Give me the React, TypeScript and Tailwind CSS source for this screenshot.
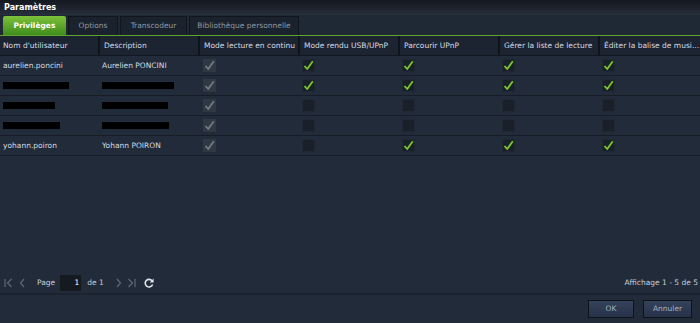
import React from 'react';

const cols = [
  { label: "Nom d'utilisateur", w: 'w-[98px]' },
  { label: 'Description', w: 'w-[100px]' },
  { label: 'Mode lecture en continu', w: 'w-[100px]' },
  { label: 'Mode rendu USB/UPnP', w: 'w-[100px]' },
  { label: 'Parcourir UPnP', w: 'w-[100px]' },
  { label: 'Gérer la liste de lecture', w: 'w-[100px]' },
  { label: 'Éditer la balise de musi...', w: 'flex-1' },
];

type Row = { user: string; desc: string; userMask?: number; descMask?: number; checks: boolean[] };

const rows: Row[] = [
  { user: 'aurelien.poncini', desc: 'Aurelien PONCINI', checks: [true, true, true, true] },
  { user: '', desc: '', userMask: 66, descMask: 72, checks: [true, true, true, true] },
  { user: '', desc: '', userMask: 52, descMask: 66, checks: [false, false, false, false] },
  { user: '', desc: '', userMask: 57, descMask: 67, checks: [false, false, false, false] },
  { user: 'yohann.poiron', desc: 'Yohann POIRON', checks: [false, true, true, true] },
];

function Check({ color }: { color: string }) {
  return (
    <svg width="11" height="11" viewBox="0 0 11 11">
      <path d="M1.5 6 L4.2 9 L9.8 1.2" fill="none" stroke={color} strokeWidth="1.8" strokeLinejoin="round" />
    </svg>
  );
}

function Box({ on, disabled }: { on: boolean; disabled?: boolean }) {
  return (
    <div
      className={`w-[13px] h-[13px] flex items-center justify-center ${
        disabled ? 'bg-[#2f3843]' : 'bg-[#1a2029] border border-[#202833]'
      }`}
    >
      {on && <Check color={disabled ? '#737b85' : '#79c92c'} />}
    </div>
  );
}

function Mask({ w }: { w: number }) {
  return <span className="inline-block h-[7px] bg-black align-middle" style={{ width: w }} />;
}

export default function App() {
  return (
    <div className="w-[700px] h-[323px] flex flex-col bg-[#212b3a] text-[#d5dbe2] text-[7.5px] overflow-hidden" style={{ fontFamily: '"DejaVu Sans", Verdana, sans-serif' }}>
      {/* title */}
      <div className="h-[15px] flex items-center px-[4px] bg-gradient-to-b from-[#14181f] to-[#272f3c] text-white font-bold text-[8px]">
        Paramètres
      </div>

      {/* tabs */}
      <div className="h-[20px] flex items-end gap-[2px] pl-[3px] bg-[#1f2835]">
        <div className="w-[63px] h-[19px] flex items-center justify-center rounded-t-[2px] bg-gradient-to-b from-[#7cc23a] to-[#3f8c1c] text-white font-bold">
          Privilèges
        </div>
        <div className="w-[50px] h-[19px] flex items-center justify-center bg-[#1a222d] border border-b-0 border-[#11161d] text-[#8f99a4]">
          Options
        </div>
        <div className="w-[67px] h-[19px] flex items-center justify-center bg-[#1a222d] border border-b-0 border-[#11161d] text-[#8f99a4]">
          Transcodeur
        </div>
        <div className="w-[110px] h-[19px] flex items-center justify-center bg-[#1a222d] border border-b-0 border-[#11161d] text-[#8f99a4]">
          Bibliothèque personnelle
        </div>
      </div>
      <div className="h-[1px] bg-[#5da52b]" />

      {/* header */}
      <div className="h-[20px] flex bg-[#1c2431] border-b border-[#121820]">
        {cols.map((c, i) => (
          <div
            key={c.label}
            className={`${c.w} flex items-center pr-[3px] ${i === 0 ? 'pl-[3px]' : 'pl-[4px] border-l-2 border-[#0f141b]'} whitespace-nowrap overflow-hidden`}
          >
            {c.label}
          </div>
        ))}
      </div>

      {/* rows */}
      {rows.map((r, i) => (
        <div key={i} className="h-[20px] flex items-center border-b border-[#161d27]">
          <div className="w-[98px] px-[3px] whitespace-nowrap">{r.userMask ? <Mask w={r.userMask} /> : r.user}</div>
          <div className="w-[100px] pl-[4px] whitespace-nowrap">{r.descMask ? <Mask w={r.descMask} /> : r.desc}</div>
          <div className="w-[100px] pl-[5px]">
            <Box on disabled />
          </div>
          {r.checks.map((c, j) => (
            <div key={j} className={`${j === 3 ? 'flex-1' : 'w-[100px]'} pl-[4px]`}>
              <Box on={c} />
            </div>
          ))}
        </div>
      ))}

      <div className="flex-1" />

      {/* pagination */}
      <div className="h-[20px] flex items-center pl-[4px] pr-[2px] text-[#c9d0d8]">
        <svg width="9" height="10" viewBox="0 0 9 10" className="text-[#5f6975]">
          <path d="M1 1 V9 M7.5 1 L3.5 5 L7.5 9" fill="none" stroke="currentColor" strokeWidth="1.2" />
        </svg>
        <svg width="7" height="10" viewBox="0 0 7 10" className="ml-[6px] text-[#5f6975]">
          <path d="M5 1 L1.5 5 L5 9" fill="none" stroke="currentColor" strokeWidth="1.2" />
        </svg>
        <span className="ml-[11px]">Page</span>
        <div className="ml-[5px] w-[21px] h-[16px] bg-[#151a21] flex items-center justify-end pr-[2px] text-white">1</div>
        <span className="ml-[6px]">de 1</span>
        <svg width="7" height="10" viewBox="0 0 7 10" className="ml-[11px] text-[#5f6975]">
          <path d="M2 1 L5.5 5 L2 9" fill="none" stroke="currentColor" strokeWidth="1.2" />
        </svg>
        <svg width="9" height="10" viewBox="0 0 9 10" className="ml-[5px] text-[#5f6975]">
          <path d="M1.5 1 L5.5 5 L1.5 9 M8 1 V9" fill="none" stroke="currentColor" strokeWidth="1.2" />
        </svg>
        <svg width="10" height="10" viewBox="0 0 10 10" className="ml-[8px] text-[#dfe4ea]">
          <path d="M8.3 3.2 A3.8 3.8 0 1 0 8.6 6.5" fill="none" stroke="currentColor" strokeWidth="1.6" />
          <path d="M9.6 0.6 V4.4 H5.8 Z" fill="currentColor" />
        </svg>
        <span className="ml-auto">Affichage 1 - 5 de 5</span>
      </div>
      <div className="h-[2px] bg-[#1b232e]" />

      {/* footer */}
      <div className="h-[28px] flex items-center justify-end gap-[9px] pr-[8px]">
        <button className="w-[46px] h-[18px] bg-gradient-to-b from-[#34425a] to-[#27324a] border border-[#0e131a] text-[#a9b2bd]">OK</button>
        <button className="w-[49px] h-[18px] bg-gradient-to-b from-[#34425a] to-[#27324a] border border-[#0e131a] text-[#a9b2bd]">Annuler</button>
      </div>
    </div>
  );
}
